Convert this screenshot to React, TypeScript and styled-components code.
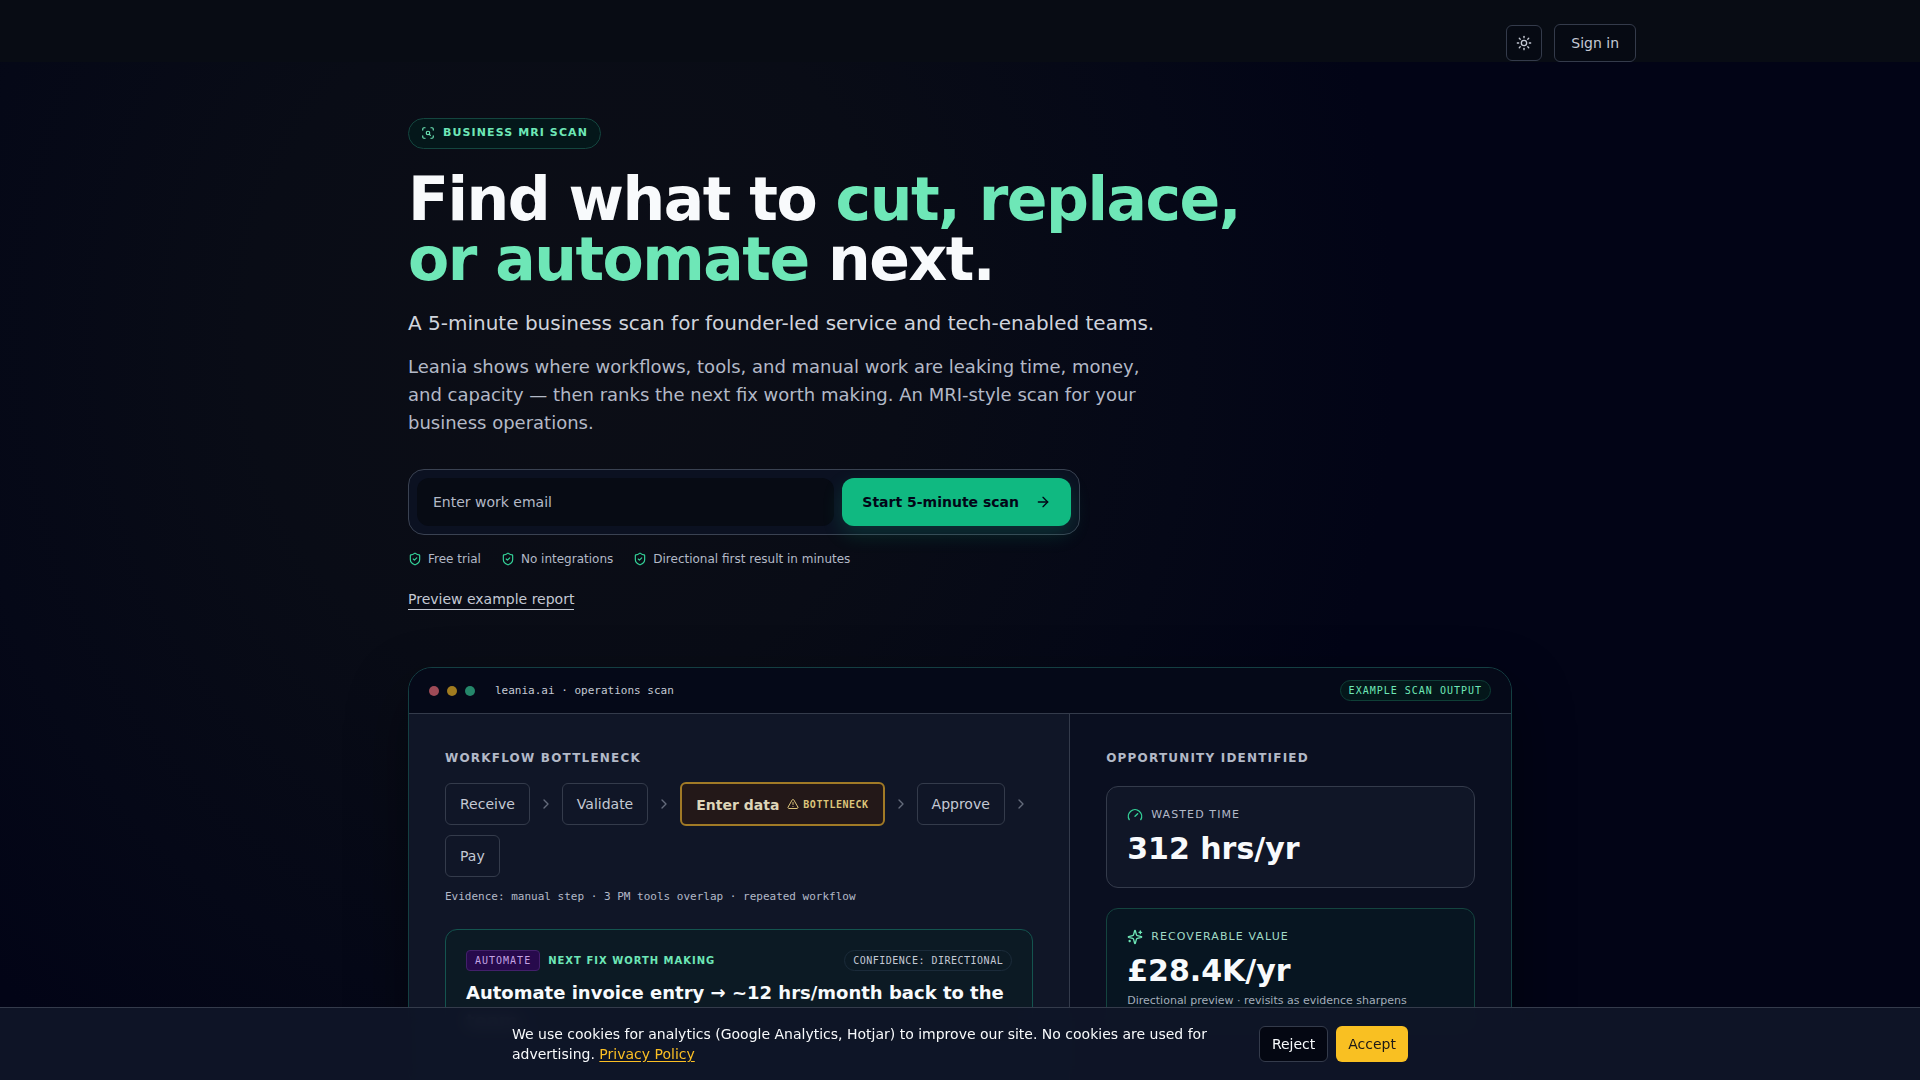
import React from "react";
import styled, { createGlobalStyle, css } from "styled-components";
import { ArrowRight, ChevronRight, Gauge, ScanSearch, ShieldCheck, Sun, TriangleAlert } from "lucide-react";

const sans = `"DejaVu Sans", "Noto Sans", sans-serif`;
const mono = `"DejaVu Sans Mono", "Liberation Mono", monospace`;

const color = {
  page: "#020416",
  line: "#343b4b",
  text: "#f8fafc",
  soft: "#c4c9d4",
  muted: "#b3b9c7",
  mint: "#6ee7b7",
  emerald: "#10b981",
  amber: "#fbbf24",
};

const GlobalStyle = createGlobalStyle`
  *, *::before, *::after { box-sizing: border-box; }
  body {
    margin: 0;
    background: ${color.page};
    color: ${color.text};
    font-family: ${sans};
    font-size: 16px;
    line-height: 24px;
  }
  h1, h2, h3, p, ul, ol, dl, dd { margin: 0; padding: 0; }
  ul, ol { list-style: none; }
  button, input { font-family: inherit; }
  svg { display: block; flex-shrink: 0; }
`;

const Page = styled.div`
  min-height: 100vh;
  overflow: hidden;
  background: radial-gradient(ellipse 820px 900px at 30% 340px, #0c0e16 0%, #090c16 40%, #050817 75%, rgba(2, 4, 22, 0) 100%);
`;

const Header = styled.header`
  background: #080c14;
`;

const HeaderInner = styled.div`
  max-width: 1400px;
  margin: 0 auto;
  padding: 24px 24px 0;
  display: flex;
  align-items: center;
  justify-content: flex-end;
  gap: 12px;
`;

const outlined = css`
  border: 1px solid ${color.line};
  border-radius: 6px;
  background: #060a13;
  color: ${color.soft};
  cursor: pointer;
`;

const ThemeButton = styled.button`
  ${outlined}
  display: grid;
  place-items: center;
  width: 36px;
  height: 36px;
  padding: 0;
`;

const SignIn = styled.a`
  ${outlined}
  padding: 8px 16px;
  font-size: 14px;
  line-height: 20px;
  text-decoration: none;
`;

const Main = styled.main`
  max-width: 1152px;
  margin: 0 auto;
  padding: 56px 24px 96px;
`;

const Eyebrow = styled.p`
  display: inline-flex;
  align-items: center;
  gap: 8px;
  padding: 6px 12px 7px;
  border: 1px solid #14463f;
  border-radius: 999px;
  background: #04171a;
  color: ${color.mint};
  font-size: 11px;
  font-weight: 700;
  line-height: 16px;
  letter-spacing: 0.1em;
  text-transform: uppercase;
  vertical-align: top;
`;

const Title = styled.h1`
  max-width: 896px;
  margin-top: 20px;
  font-size: 60px;
  font-weight: 700;
  line-height: 60px;
  letter-spacing: -0.025em;

  em {
    font-style: normal;
    color: ${color.mint};
  }
`;

const Lead = styled.p`
  margin-top: 20px;
  color: #d0d4dd;
  font-size: 20px;
  line-height: 28px;
`;

const Intro = styled.p`
  max-width: 768px;
  margin-top: 16px;
  color: ${color.muted};
  font-size: 18px;
  line-height: 28px;
`;

const ScanForm = styled.form`
  display: flex;
  gap: 8px;
  max-width: 672px;
  margin-top: 32px;
  padding: 8px;
  border: 1px solid #3a4252;
  border-radius: 16px;
  background: #0b1121;
`;

const EmailInput = styled.input`
  flex: 1;
  min-width: 0;
  height: 48px;
  padding: 0 16px;
  border: 0;
  border-radius: 12px;
  outline: none;
  background: #070b14;
  color: ${color.text};
  font-size: 14px;

  &::placeholder {
    color: ${color.muted};
    opacity: 1;
  }
`;

const StartButton = styled.button`
  display: flex;
  align-items: center;
  gap: 16px;
  height: 48px;
  padding: 0 20px;
  border: 0;
  border-radius: 12px;
  background: ${color.emerald};
  box-shadow: 0 8px 20px rgba(16, 185, 129, 0.2);
  color: #020617;
  font-size: 14px;
  font-weight: 700;
  cursor: pointer;
`;

const Perks = styled.ul`
  display: flex;
  flex-wrap: wrap;
  gap: 8px 20px;
  margin-top: 16px;
  color: ${color.muted};
  font-size: 12px;
  line-height: 16px;

  li {
    display: flex;
    align-items: center;
    gap: 6px;
  }

  svg {
    color: #34d399;
  }
`;

const PreviewLine = styled.p`
  margin-top: 20px;
`;

const PreviewLink = styled.a`
  padding-bottom: 2px;
  border-bottom: 1px solid ${color.soft};
  color: ${color.soft};
  font-size: 14px;
  text-decoration: none;
`;

const Report = styled.section`
  margin-top: 56px;
  overflow: hidden;
  border: 1px solid #143f42;
  border-radius: 24px;
  background: #0a0f20;
  box-shadow: 0 24px 60px rgba(0, 0, 0, 0.4);
`;

const ReportBar = styled.header`
  display: flex;
  align-items: center;
  gap: 20px;
  padding: 12px 20px;
  border-bottom: 1px solid ${color.line};
  background: #050918;
  color: ${color.soft};
  font-family: ${mono};
  font-size: 11px;
  line-height: 16px;
`;

const Dots = styled.div`
  display: flex;
  gap: 8px;
`;

const Dot = styled.span<{ $fill: string }>`
  width: 10px;
  height: 10px;
  border-radius: 50%;
  background: ${(p) => p.$fill};
`;

const tones = {
  mint: css`
    border-color: #0f3f37;
    border-radius: 999px;
    background: #04171a;
    color: ${color.mint};
    letter-spacing: 0.1em;
  `,
  purple: css`
    border-color: #43206b;
    border-radius: 4px;
    background: #270a4c;
    color: #c4a3e4;
    letter-spacing: 0.1em;
  `,
  plain: css`
    border-color: #1b2b3a;
    border-radius: 999px;
    color: ${color.soft};
    letter-spacing: 0.05em;
  `,
};

const Tag = styled.span<{ $tone: keyof typeof tones; $end?: boolean }>`
  padding: 2px 8px;
  border: 1px solid;
  font-family: ${mono};
  font-size: 10px;
  line-height: 15px;
  text-transform: uppercase;
  ${(p) => tones[p.$tone]}
  ${(p) => p.$end && "margin-left: auto;"}
`;

const ReportBody = styled.div`
  display: grid;
  grid-template-columns: 3fr 2fr;
`;

const Panel = styled.div<{ $raised?: boolean }>`
  min-width: 0;
  padding: 36px;
  ${(p) =>
    p.$raised &&
    css`
      border-right: 1px solid ${color.line};
      background: #101627;
    `}
`;

const PanelTitle = styled.h2`
  color: ${color.muted};
  font-size: 12px;
  font-weight: 700;
  line-height: 16px;
  letter-spacing: 0.1em;
  text-transform: uppercase;
`;

const Steps = styled.ol`
  display: flex;
  flex-wrap: wrap;
  align-items: center;
  gap: 9px 8px;
  margin-top: 16px;
  font-size: 14px;
  line-height: 20px;
`;

const Step = styled.li<{ $hot?: boolean }>`
  padding: 10px 14px;
  border: 1px solid ${color.line};
  border-radius: 6px;
  color: ${color.soft};
  ${(p) =>
    p.$hot &&
    css`
      display: flex;
      gap: 8px;
      padding: 11px 14px 9px;
      border: 2px solid #a17a26;
      background: #231818;
      color: #ddd5b8;
      font-weight: 700;
    `}
`;

const StepArrow = styled.li`
  color: #646b7b;
`;

const StepFlag = styled.span`
  display: flex;
  align-items: center;
  gap: 4px;
  height: 18px;
  color: #dcc47a;
  font-family: ${mono};
  font-size: 10px;
  font-weight: 600;
  line-height: 15px;
  letter-spacing: 0.05em;
  text-transform: uppercase;
`;

const Evidence = styled.p`
  margin-top: 12px;
  color: ${color.muted};
  font-family: ${mono};
  font-size: 11px;
  line-height: 16px;
`;

const FixCard = styled.article`
  margin-top: 24px;
  padding: 20px;
  border: 1px solid #14544f;
  border-radius: 12px;
  background: #0c1a24;
`;

const FixMeta = styled.div`
  display: flex;
  align-items: center;
  gap: 8px;
`;

const FixLabel = styled.span`
  color: ${color.mint};
  font-size: 10px;
  font-weight: 700;
  line-height: 15px;
  letter-spacing: 0.1em;
  text-transform: uppercase;
`;

const FixTitle = styled.h3`
  margin-top: 8px;
  font-size: 18px;
  font-weight: 700;
  line-height: 28px;
`;

const Metrics = styled.dl`
  display: grid;
  gap: 20px;
  margin-top: 20px;
`;

const Metric = styled.div<{ $accent?: boolean }>`
  padding: 20px;
  border: 1px solid ${(p) => (p.$accent ? "#14443f" : color.line)};
  border-radius: 12px;
  background: ${(p) => (p.$accent ? "#071521" : "#101627")};

  dt {
    display: flex;
    align-items: center;
    gap: 8px;
    color: ${(p) => (p.$accent ? "#a2dcc6" : color.muted)};
    font-size: 11px;
    line-height: 16px;
    letter-spacing: 0.1em;
    text-transform: uppercase;
  }

  svg {
    color: ${(p) => (p.$accent ? color.mint : "#34d399")};
  }
`;

const MetricValue = styled.dd`
  margin-top: 8px;
  font-size: 30px;
  font-weight: 700;
  line-height: 36px;
`;

const MetricNote = styled.dd`
  margin-top: 4px;
  color: #a3adba;
  font-size: 11px;
  line-height: 16px;
`;

const CookieBar = styled.aside`
  position: fixed;
  inset: auto 0 0;
  z-index: 10;
  padding: 16px;
  border-top: 1px solid ${color.line};
  background: rgba(15, 21, 39, 0.95);
  backdrop-filter: blur(8px);
`;

const CookieInner = styled.div`
  display: flex;
  align-items: center;
  justify-content: space-between;
  gap: 16px;
  max-width: 896px;
  margin: 0 auto;
  font-size: 14px;
  line-height: 20px;

  a {
    color: ${color.amber};
    text-underline-offset: 2px;
  }
`;

const CookieActions = styled.div`
  display: flex;
  flex-shrink: 0;
  gap: 8px;
`;

const CookieButton = styled.button<{ $primary?: boolean }>`
  height: 36px;
  padding: 0 12px;
  border: ${(p) => (p.$primary ? "0" : `1px solid ${color.line}`)};
  border-radius: 6px;
  background: ${(p) => (p.$primary ? "#f9c022" : "#040712")};
  color: ${(p) => (p.$primary ? "#1c1917" : color.text)};
  font-size: 14px;
  cursor: pointer;
`;

function Arrow() {
  return (
    <StepArrow aria-hidden="true">
      <ChevronRight size={16} />
    </StepArrow>
  );
}

function SparklesIcon() {
  return (
    <svg
      width="16"
      height="16"
      viewBox="0 0 24 24"
      fill="none"
      stroke="currentColor"
      strokeWidth="2"
      strokeLinecap="round"
      strokeLinejoin="round"
      aria-hidden="true"
    >
      <path d="M9.937 15.5A2 2 0 0 0 8.5 14.063l-6.135-1.582a.5.5 0 0 1 0-.962L8.5 9.936A2 2 0 0 0 9.937 8.5l1.582-6.135a.5.5 0 0 1 .963 0L14.063 8.5A2 2 0 0 0 15.5 9.937l6.135 1.581a.5.5 0 0 1 0 .964L15.5 14.063a2 2 0 0 0-1.437 1.437l-1.582 6.135a.5.5 0 0 1-.963 0z" />
      <path d="M20 3v4M22 5h-4M4 17v2M5 18H3" />
    </svg>
  );
}

export default function App() {
  return (
    <Page>
      <GlobalStyle />
      <Header>
        <HeaderInner>
          <ThemeButton type="button" aria-label="Toggle theme">
            <Sun size={16} />
          </ThemeButton>
          <SignIn href="#sign-in">Sign in</SignIn>
        </HeaderInner>
      </Header>

      <Main>
        <Eyebrow>
          <ScanSearch size={14} />
          Business MRI scan
        </Eyebrow>
        <Title>
          Find what to <em>cut, replace, or automate</em> next.
        </Title>
        <Lead>A 5-minute business scan for founder-led service and tech-enabled teams.</Lead>
        <Intro>
          Leania shows where workflows, tools, and manual work are leaking time, money, and capacity — then ranks
          the next fix worth making. An MRI-style scan for your business operations.
        </Intro>

        <ScanForm onSubmit={(e) => e.preventDefault()}>
          <EmailInput type="email" name="email" aria-label="Work email" placeholder="Enter work email" />
          <StartButton type="submit">
            Start 5-minute scan
            <ArrowRight size={16} />
          </StartButton>
        </ScanForm>

        <Perks>
          {["Free trial", "No integrations", "Directional first result in minutes"].map((perk) => (
            <li key={perk}>
              <ShieldCheck size={14} />
              {perk}
            </li>
          ))}
        </Perks>
        <PreviewLine>
          <PreviewLink href="#example">Preview example report</PreviewLink>
        </PreviewLine>

        <Report id="example">
          <ReportBar>
            <Dots aria-hidden="true">
              <Dot $fill="#9f4b57" />
              <Dot $fill="#a17c1f" />
              <Dot $fill="#25876a" />
            </Dots>
            <span>leania.ai · operations scan</span>
            <Tag $tone="mint" $end>
              Example scan output
            </Tag>
          </ReportBar>
          <ReportBody>
            <Panel $raised>
              <PanelTitle>Workflow bottleneck</PanelTitle>
              <Steps>
                <Step>Receive</Step>
                <Arrow />
                <Step>Validate</Step>
                <Arrow />
                <Step $hot>
                  Enter data
                  <StepFlag>
                    <TriangleAlert size={12} />
                    Bottleneck
                  </StepFlag>
                </Step>
                <Arrow />
                <Step>Approve</Step>
                <Arrow />
                <Step>Pay</Step>
              </Steps>
              <Evidence>Evidence: manual step · 3 PM tools overlap · repeated workflow</Evidence>
              <FixCard>
                <FixMeta>
                  <Tag $tone="purple">Automate</Tag>
                  <FixLabel>Next fix worth making</FixLabel>
                  <Tag $tone="plain" $end>
                    Confidence: directional
                  </Tag>
                </FixMeta>
                <FixTitle>Automate invoice entry → ~12 hrs/month back to the team.</FixTitle>
              </FixCard>
            </Panel>
            <Panel>
              <PanelTitle>Opportunity identified</PanelTitle>
              <Metrics>
                <Metric>
                  <dt>
                    <Gauge size={16} />
                    Wasted time
                  </dt>
                  <MetricValue>312 hrs/yr</MetricValue>
                </Metric>
                <Metric $accent>
                  <dt>
                    <SparklesIcon />
                    Recoverable value
                  </dt>
                  <MetricValue>£28.4K/yr</MetricValue>
                  <MetricNote>Directional preview · revisits as evidence sharpens</MetricNote>
                </Metric>
              </Metrics>
            </Panel>
          </ReportBody>
        </Report>
      </Main>

      <CookieBar aria-label="Cookie notice">
        <CookieInner>
          <p>
            We use cookies for analytics (Google Analytics, Hotjar) to improve our site. No cookies are used for
            advertising. <a href="#privacy">Privacy Policy</a>
          </p>
          <CookieActions>
            <CookieButton type="button">Reject</CookieButton>
            <CookieButton type="button" $primary>
              Accept
            </CookieButton>
          </CookieActions>
        </CookieInner>
      </CookieBar>
    </Page>
  );
}
